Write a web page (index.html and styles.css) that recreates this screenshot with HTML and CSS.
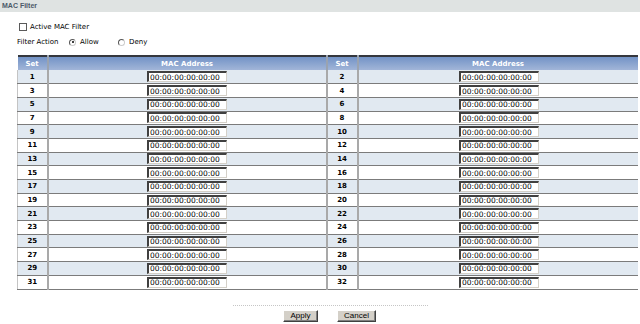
FILE: index.html
```html
<!DOCTYPE html>
<html lang="en">
<head>
  <meta charset="UTF-8">
  <title>MAC Filter</title>
  <link rel="stylesheet" href="styles.css">
</head>
<body>
  <div class="titlebar">MAC Filter</div>
  <div class="content">
    <label class="opt opt-active"><input type="checkbox" class="chk"> Active MAC Filter</label>
    <div class="opt opt-action">
      <span class="lbl">Filter Action</span>
      <label class="rad"><input type="radio" name="act" checked> Allow</label>
      <label class="rad"><input type="radio" name="act"> Deny</label>
    </div>
    <table class="mac-table">
      <colgroup><col class="c-set"><col class="c-mac"><col class="c-set2"><col class="c-mac2"></colgroup>
      <thead>
        <tr><th>Set</th><th>MAC Address</th><th>Set</th><th>MAC Address</th></tr>
      </thead>
      <tbody id="rows"></tbody>
    </table>
    <div class="footer">
      <div class="dots"></div>
      <div class="btns">
        <button class="btn btn-apply">Apply</button>
        <button class="btn btn-cancel">Cancel</button>
      </div>
    </div>
  </div>
  <script>
    let tb=document.getElementById('rows');
    for(let i=1;i<=31;i+=2){
      let tr=document.createElement('tr');
      tr.className=((i-1)/2)%2==0?'odd':'even';
      tr.innerHTML='<td class="set">'+i+'</td><td class="mac"><input type="text" value="00:00:00:00:00:00"></td>'+
        '<td class="set set2">'+(i+1)+'</td><td class="mac"><input type="text" value="00:00:00:00:00:00"></td>';
      tb.appendChild(tr);
    }
  </script>
</body>
</html>
```

FILE: styles.css
```css
*{margin:0; padding:0; box-sizing:border-box;}
body{background:#fff; font-family:"DejaVu Sans", Verdana, sans-serif; font-size:7px; color:#000;}

.titlebar{height:12px; background:#dfe3e2; color:#4b5968; font:bold 7px "Liberation Sans", Arial, sans-serif; line-height:12px; padding-left:2px;}

.content{padding:0 3px 0 17px;}
.opt{display:flex; align-items:center; height:10px;}
.opt-active{margin-top:10px; padding-left:2px; gap:3px;}
.opt-action{margin-top:4px; height:12px;}
.opt-action .lbl{width:52px;}
.rad{display:flex; align-items:center; gap:4px; width:49px;}

.chk{appearance:none; width:8px; height:8px; border:1px solid #5a5a5a; background:#fff;}
.rad input{appearance:none; width:7px; height:7px; border-radius:50%; border:1px solid #777; border-color:#555 #ccc #ccc #555; background:#fff; position:relative;}
.rad input:checked::after{content:""; position:absolute; left:1.5px; top:1.5px; width:2px; height:2px; border-radius:50%; background:#000;}

.mac-table{width:620px; margin-top:7px; border-collapse:collapse; table-layout:fixed; border-top:2px solid #34373d;}
.c-set{width:30px;}
.c-mac{width:279px;}
.c-set2{width:31px;}
.c-mac2{width:280px;}
.mac-table th{height:14px; background:linear-gradient(#7393c6,#a1b5d8); color:#fff; font-weight:bold; font-size:7px; text-align:center; border-left:2px solid #9aa3b0;}
.mac-table th:first-child{border-left:none;}
.mac-table td{height:13.7px; border-bottom:1px solid #7b7b7b; border-left:2px solid #a9a9a9; text-align:center; padding:0;}
.mac-table td:first-child{border-left:1px solid #c4c4c4;}
.mac-table tr.odd td{background:#e1e9f1;}
.mac-table tr.even td{background:#fff;}
.mac-table td.set{font-weight:bold; font-size:7px;}
.mac-table td.mac input{display:block; margin:0 auto; width:80px; height:11px; border-top:2px solid #404040; border-left:2px solid #404040; border-right:1px solid #d4d0c8; border-bottom:1px solid #d4d0c8; padding:0 0 0 1px; font:7.5px "DejaVu Sans", Verdana, sans-serif; color:#000; background:#fff; line-height:8px; outline:none;}
.mac-table td.mac:last-child input{position:relative; left:1px;}

.footer{margin-top:15px;}
.dots{width:195px; margin:0 auto; border-top:1px dotted #c6c6c6; position:relative; left:3px;}
.btns{display:flex; justify-content:center; gap:19px; margin-top:4px; padding-left:5px;}
.btn{height:12px; background:#d4d0c8; border:1px solid; border-color:#fff #404040 #404040 #fff; box-shadow:inset -1px -1px #808080; font:8px "Liberation Sans", Arial, sans-serif; color:#000; line-height:9px;}
.btn-apply{width:35px;}
.btn-cancel{width:39px;}
```
